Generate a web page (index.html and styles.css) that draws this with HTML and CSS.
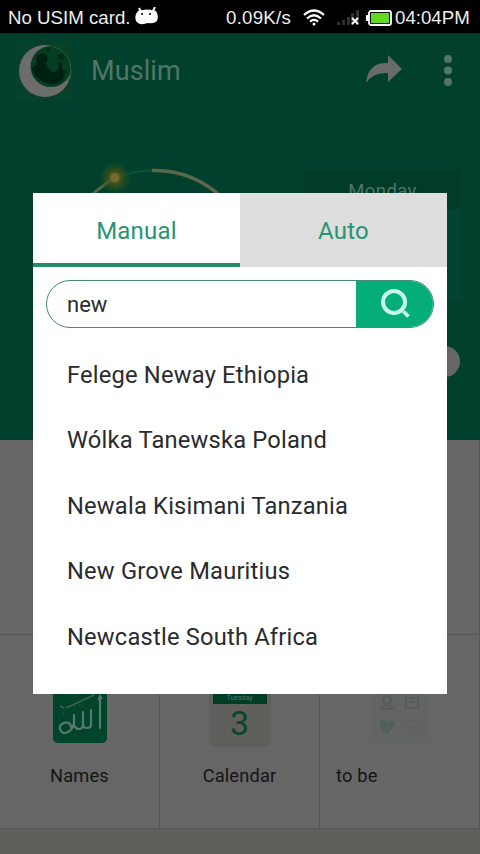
FILE: index.html
```html
<!DOCTYPE html>
<html lang="en">
<head>
<meta charset="utf-8">
<title>Muslim</title>
<link rel="stylesheet" href="styles.css">
</head>
<body>
<div class="phone">
  <header class="status">
    <span class="carrier">No USIM card.</span>
    <svg class="droid" width="24" height="18" viewBox="0 0 24 18"><path d="M4 1l2 4M20 0l-2 4" stroke="#fff" stroke-width="2"/><path d="M3 4Q12 1 21 4Q24 9 22 14Q19 17 13 16Q4 19 1 14Q-1 8 3 4Z" fill="#fff"/><circle cx="7" cy="7" r="1"/><circle cx="15" cy="7" r="1"/></svg>
    <span class="speed">0.09K/s</span>
    <svg class="wifi" width="22" height="17" viewBox="0 0 22 17" fill="none" stroke="#fff" stroke-width="2.2"><path d="M1 6Q11-3 21 6M4 9.5Q11 3 18 9.5M7 12.6Q11 9 15 12.6"/><circle cx="11" cy="15" r="1.5" fill="#fff" stroke="none"/></svg>
    <svg class="signal" width="23" height="17" viewBox="0 0 23 17"><path d="M0 13h3v3H0zM5 11h3v5H5zM10 8h3v8h-3zM14 4h3v12h-3zM19 1h3v15h-3z" fill="#303030"/><path d="M15 9l6 6M21 9l-6 6" stroke="#fff" stroke-width="2"/></svg>
    <svg class="battery" width="26" height="16" viewBox="0 0 26 16"><path d="M0 5h3v6H0z" fill="#fff"/><rect x="3" y="1" width="22" height="14" rx="2" fill="#111" stroke="#fff" stroke-width="1.8"/><rect x="5" y="3" width="18" height="10" fill="#62d823"/></svg>
    <span class="time">04:04PM</span>
  </header>
  <div class="appbar">
    <svg class="logo" width="62" height="58" viewBox="0 0 62 58"><path d="M2 0h58v58H2z" fill="#08412a"/><circle cx="31" cy="29" r="26" fill="#6c6c6a"/><circle cx="37" cy="24.5" r="20.5" fill="#033d22"/><path d="M38 4Q57 9 57 29Q57 34 54 39" fill="none" stroke="#3d5548"/><path d="M23 14q4-5 9-1q3 3 0 9l3 5l5 4l4-3l1-8l3 1l1 9q2 5-1 8q-9 8-20 1q-9-5-10-13l5-4q-2-4 0-8z" fill="#00200f"/><circle cx="34" cy="8" r="2" fill="#002b16"/><circle cx="47" cy="15" r="3" fill="#002b16"/><circle cx="51" cy="30" r="2" fill="#002b16"/></svg>
    <h1 class="title">Muslim</h1>
    <svg class="share" width="36" height="29" viewBox="0 0 36 29"><path d="M0 28Q2 7 22 8V0L36 14L22 27V18Q7 17 0 28Z" fill="#686b69"/></svg>
    <svg class="more" width="10" height="34" viewBox="0 0 10 34" fill="#527568"><circle cx="5" cy="5" r="4"/><circle cx="5" cy="16.5" r="4"/><circle cx="5" cy="28" r="4"/></svg>
  </div>
  <section class="hero">
    <svg class="dial" width="170" height="170" viewBox="0 0 170 170">
      <defs><radialGradient id="glow"><stop offset="0" stop-color="#826a2e"/><stop offset=".35" stop-color="#4c5519" stop-opacity=".85"/><stop offset="1" stop-color="#21491f" stop-opacity="0"/></radialGradient></defs>
      <path d="M13 43Q25 31 44 18" fill="none" stroke="#596446" stroke-width="3"/>
      <path d="M50 16Q65 11 82 10.500" fill="none" stroke="#07533b" stroke-width="2"/>
      <path d="M82 10.500Q121 9 153 38" fill="none" stroke="#5c674b" stroke-width="3.500"/>
      <circle cx="45" cy="18" r="17" fill="url(#glow)"/><circle cx="45" cy="17.500" r="4.500" fill="#77692d"/>
    </svg>
    <div class="date"><div class="weekday">Monday</div><div class="dateface"></div></div>
    <div class="pill"></div>
  </section>
  <main class="grid">
    <div class="cell tall"></div><div class="cell tall"></div><div class="cell tall"></div>
    <div class="cell">
      <div class="names"><svg width="54" height="56" viewBox="0 0 54 56"><path d="M7 19l4 2M13 21L41 8" stroke="#446348" stroke-width="1.500"/><path d="M12 23l-2 5M21 18v3M27 17v3" stroke="#304d31"/><path d="M47 9V41M38 23V38Q38 41 34 41Q30 41 30 37V25M30 37Q30 42 26 42Q21 42 21 36V28M21 36Q20 42 15 45Q9 48 7 42Q6 38 11 36Q17 34 18 40" fill="none" stroke="#587a6d" stroke-width="2.200" stroke-linecap="round"/><path d="M45 13l2-4l2 3" fill="none" stroke="#587a6d" stroke-width="1.500"/></svg></div>
      <span class="label">Names</span>
    </div>
    <div class="cell">
      <div class="cal"><div class="calhead">Tuesday</div><div class="calnum">3</div></div>
      <span class="label">Calendar</span>
    </div>
    <div class="cell">
      <svg class="future" width="54" height="56" viewBox="0 0 54 56"><path d="M0 0h54v56H0z" fill="#626564"/><g fill="none" stroke="#555c59" stroke-width="2"><circle cx="14" cy="13" r="4"/><path d="M8 22q6-9 12 0zM33 11h12v10H33zM36 15h6"/></g><path d="M14 47Q2 36 9 33q3 0 5 3q3-4 6-2q5 4-6 13z" fill="#526059"/><path d="M31 34h17M31 40h17M31 46h17" stroke="#5d605f"/></svg>
      <span class="label start">to be</span>
    </div>
  </main>
  <footer class="strip"></footer>

  <div class="dialog">
    <div class="tabs"><div class="tab active">Manual</div><div class="tab">Auto</div></div>
    <div class="search">
      <div class="query">new</div>
      <div class="go"><svg width="34" height="34" viewBox="0 0 34 34" fill="none" stroke="#c4ffeb"><circle cx="16" cy="15" r="11" stroke-width="4"/><path d="M25.500 24.500l5 5" stroke-width="3.800"/></svg></div>
    </div>
    <ul class="results">
      <li>Felege Neway Ethiopia</li>
      <li>Wólka Tanewska Poland</li>
      <li>Newala Kisimani Tanzania</li>
      <li>New Grove Mauritius</li>
      <li>Newcastle South Africa</li>
    </ul>
  </div>
</div>
</body>
</html>
```
FILE: styles.css
```css
* { box-sizing: border-box; }
body { margin: 0; font-family: Roboto, "Noto Sans", sans-serif; }
.phone { position: relative; width: 480px; height: 854px; overflow: hidden; display: flex; flex-direction: column; background: #666; }
svg { display: block; flex: none; }
.status { height: 33px; flex: none; background: #000; color: #eee; display: flex; align-items: center; padding: 2px 8px 0; font: 18.7px "Liberation Sans", sans-serif; white-space: nowrap; }
.carrier { width: 122px; }
.droid { margin: -4px 0 0 5px; }
.speed { margin-left: 67px; width: 66px; letter-spacing: .25px; }
.wifi { margin-left: 11px; }
.signal { margin-left: 12px; }
.battery { margin-left: 6px; }
.time { margin-left: 3px; }
.appbar { height: 75px; flex: none; background: #00402d; display: flex; align-items: center; padding: 0 27px 0 14px; }
.title { margin: 0 0 0 15px; font-size: 27px; font-weight: 400; letter-spacing: .1px; color: #527568; flex: 1; }
.share { margin-top: -2px; }
.more { margin-left: 41px; }
.hero { height: 332px; flex: none; background: #00402d; display: flex; align-items: flex-start; }
.dial { margin: 52px 0 0 70px; }
.date { margin: 62px 0 0 64px; width: 157px; }
.weekday { height: 39px; background: #003c28; color: #527568; text-align: center; font-size: 18.5px; line-height: 43px; letter-spacing: .4px; }
.dateface { height: 91px; background: #004431; }
.pill { width: 40px; height: 31px; margin: 238px 0 0 -41px; border-radius: 16px; background: #666; }
.grid { height: 389px; flex: none; display: grid; grid-template-columns: repeat(3, 160px); grid-template-rows: 195px 194px; background: #666; }
.cell { border-right: 1px solid #585858; border-bottom: 1px solid #585858; display: flex; flex-direction: column; align-items: center; padding-top: 52px; }
.label { font-size: 18.3px; line-height: 24px; letter-spacing: .15px; margin-top: 21px; color: #151515; }
.start { align-self: flex-start; margin-left: 16px; }
.names { width: 54px; height: 56px; border-radius: 5px; background: #00442b; }
.cal { width: 62px; height: 60px; margin-bottom: -4px; border-radius: 5px; background: #5f605b; display: flex; flex-direction: column; align-items: center; }
.calhead { width: 54px; height: 17px; background: #003d25; color: #527568; font-size: 7px; line-height: 22px; text-align: center; }
.calnum { font-size: 34px; line-height: 38px; color: #08452e; }
.strip { flex: 1; background: #5f605b; }
.dialog { position: absolute; left: 33px; top: 193px; width: 414px; height: 501px; background: #fff; }
.tabs { display: flex; height: 74px; }
.tab { width: 207px; background: #dedede; color: #299474; font-size: 24px; letter-spacing: .2px; text-align: center; line-height: 77px; }
.active { background: #fff; border-bottom: 4px solid #268b69; }
.search { margin: 13px 13px 0; width: 388px; height: 48px; border: 1.5px solid #458b77; border-radius: 24px; display: flex; overflow: hidden; }
.query { flex: 1; padding-left: 20px; font-size: 22px; line-height: 47px; color: #292b2d; }
.go { width: 77px; background: #05ae78; padding: 6px 0 0 22px; }
.results { margin: 15px 0 0; padding: 0 0 0 34px; list-style: none; font-size: 23.7px; letter-spacing: .2px; line-height: 65.4px; color: #292b2f; white-space: nowrap; }
```
